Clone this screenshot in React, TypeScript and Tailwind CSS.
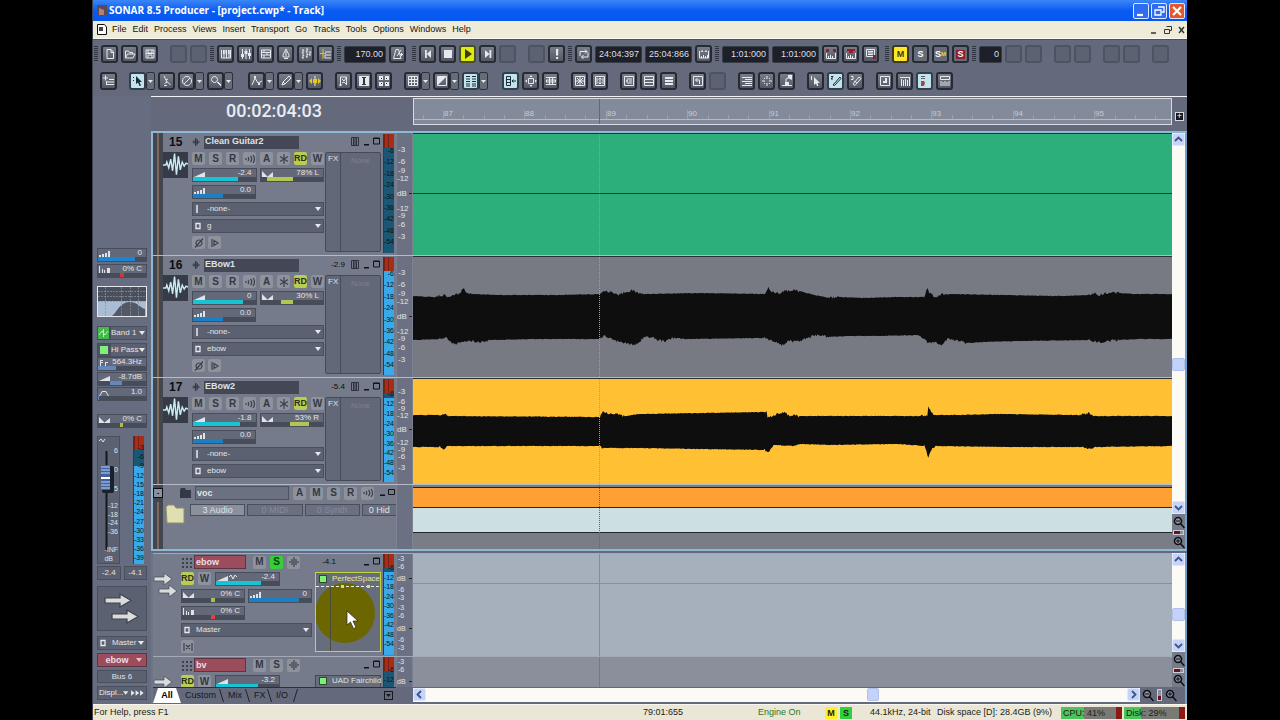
import React from "react";

type Glyph = { d?: string; f?: string; color?: string; f2?: string; color2?: string };

const glyphs: Record<string, Glyph> = {
  none: {},
  newFile: { d: "M3 1.500h4l2.500 2.500v6.500h-6.500zM7 1.500v3h2.500" },
  open: { d: "M1.500 10V3h3l1 1.500h3V6M1.500 10l2-4h7.500l-2 4z" },
  save: { d: "M2 2h8v8H2zM4 2v3h4V2M4 10V7h4v3", f: "M2 5h8v1H2z" },
  keys: { d: "M1.500 2v8h9V2M4 2v8M6.500 2v8M9 2v8", f: "M3 2h1.500v4H3zM5.500 2H7v4H5.500zM8 2h1.500v4H8z" },
  mixer: { d: "M2.500 1v10M6 1v10M9.500 1v10", f: "M1 6h3v3H1zM4.500 3h3v3h-3zM8 5h3v3H8z" },
  list: { d: "M1.500 2h9v8h-9zM1.500 4.500h9M1.500 7h9M4 2v2.500M7 4.500V7M4 7v3" },
  drop: { d: "M6 1L3 7v2h6V7zM4 10.500h4M6 3v5" },
  notes: { d: "M2 2h2L2 5h2M6 1h2L6 4h2M9 4h2L9 7h2M2 7h2l-2 3h2M6 6h2L6 9h2" },
  syn: { d: "M5 4h6M5 7h6M5 10h6M5 7v3", f2: "M0 5h6v1H0zM2.500 1h1v10h-1z", color2: "#e8c820" },
  metro: { d: "M4 1.500h2.500L9 10.500H1.500zM5 8l4-6M8 6.500h3M9.500 5v3" },
  rewind: { f: "M3 2h1.800v8H3zM9 2v8L4.800 6z" },
  stop: { f: "M2 2h8v8H2z" },
  play: { f: "M3 1l7 5-7 5z", color: "#3a3a10" },
  end: { f: "M7.500 2h1.800v8H7.500zM3 2v8l4.500-4z" },
  bang: { f: "M5 1h2.200v6.500H5zM5 9h2.200v2H5z" },
  loop: { d: "M2 8V3.500h7M7 1.500l2 2-2 2M10 4.500v4.500H3.500M5.500 7l-2 2 2 2" },
  punch: { d: "M1.500 3v7h9V3M3.500 10V8M5.500 10V7M7.500 10V8M9.500 10V7M3 4l1-1.500L5 4M7 4l1-1.500L9 4" },
  punchR: { d: "M1.500 5v5.500h9V5M3.500 10V8M5.500 10V7M7.500 10V8", f2: "M1 1h3v3H1zM8 1h3v3H8z", color2: "#a01822" },
  punchRR: { d: "M1.500 5v5.500h9V5M3.500 10V8M5.500 10V7M7.500 10V8", f2: "M2 1h8v2H8v2H4V3H2z", color2: "#a01822" },
  listR: { d: "M1.500 1.500h8v7h-8zM3 3.500h5M3 5h5M3 6.500h5", f2: "M8 7h3v4H8z", color2: "#a01822" },
  addTrack: { d: "M2.500 0.500v5M0 3h5M6 4.500h5M4 7h7M4 9.500h7M3.500 6v4" },
  pointer: { f: "M4 1l6 6H7.500L9 10.500l-1.500.5L6 7.500 4 9z", color: "#1d2c3c", d: "M1 2l1 1M1 6l1-1" },
  scissors: { d: "M3 1l3 6M3.500 8.500l3-1.500 3 3M3 10.500h3M5 5l2-1" },
  mute: { d: "M6 1.500a4.500 4.500 0 1 0 .01 0M3 9l6-6" },
  zoom: { d: "M4.500 1.500a3 3 0 1 0 .01 0M7 7l4 4M8 7l3 3" },
  env: { d: "M1 10l3-7 3 5 4-2", f: "M3 1h2v2H3zM7 8h2v2H7z" },
  pencil: { d: "M2 10l1-3 6-6 2 2-6 6zM3 7l2 2" },
  scrub: { f2: "M0 6l3-3v6zM12 6L9 3v6zM4 4h4v4H4z", color2: "#e8c820", d: "M6 1v3M6 8v3" },
  wand: { d: "M2.500 11V2h6v8M4 4l2 2 2-3M4 8l2-1 3 3M1 10h3" },
  text: { f: "M1 1h10v10H1z", f2: "M4 2h4v1H7v6h1v1H4V9h1V3H4z", color2: "#333844" },
  snapG: { f: "M1 1h4v4H1zM7 1h4v4H7zM1 7h4v4H1zM7 7h4v4H7z", f2: "M3 3h1v1H3zM8 3h1v1H8zM3 8h1v1H3zM8 8h1v1H8z", color2: "#333844" },
  grid: { d: "M1.500 1.500h9v9h-9zM1.500 4.500h9M1.500 7.500h9M4.500 1.500v9M7.500 1.500v9" },
  fade: { f: "M2 2h8L2 10z", d: "M1.500 1.500h9v9h-9z" },
  rows: { d: "M1 1.500h4M1 4h4M1 6.500h4M1 9h4M1 11h4M7 1.500h4M7 4h4M7 6.500h4M7 9h4M7 11h4", color: "#1d2c3c" },
  splitL: { d: "M1.500 1.500h4v9h-4zM1.500 4.500h4M1.500 7.500h4M11 6H7M8.500 4.500L7 6l1.500 1.500", color: "#1d2c3c" },
  move: { d: "M3.500 3.500h5v5h-5z", f: "M6 0l1.500 2h-3zM6 12l1.500-2h-3zM0 6l2-1.500v3zM12 6l-2-1.500v3z" },
  table: { d: "M1 2.500h10M1 9.500h10M1.500 5h9v2h-9zM4.500 2v8M7.500 2v8" },
  fit: { d: "M1.500 1.500h9v9h-9zM6 1.500v9M1.500 6h9M3 3l6 6M9 3L3 9" },
  fitV: { d: "M1.500 1.500h9v9h-9zM6 3v6M4.500 4.500L6 3l1.500 1.500M4.500 7.500L6 9l1.500-1.500M3 3v6M9 3v6" },
  boxIn: { d: "M1.500 1.500h9v9h-9zM4 4h5M4 8h5M3 5l2 1-2 1M6 6h3" },
  boxRow: { d: "M1.500 1.500h9v9h-9zM1.500 4.500h9M1.500 7.500h9" },
  lines: { f: "M2 2h8v2H2zM2 5h8v2H2zM2 8h8v2H2z" },
  undo: { d: "M1.500 1.500h9v9h-9zM3.500 5h4v4M5.500 3l-2 2 2 2" },
  align: { d: "M1 2.500h10M4 4.500h7M1 6.500h10M4 8.500h7M1 10.500h10" },
  cross: { d: "M6 1v3M6 8v3M1 6h3M8 6h3M3 3l1 1M9 3L8 4M3 9l1-1M9 9L8 8" },
  lamp: { d: "M1 10.500h10M5 10V4M5 4l4-2", f: "M7 0h4v5L7 3zM4 7h4v3H4z" },
  arrow1: { d: "M1.500 1v4", f: "M4 2l6 6H7.500L8.500 11H7L6 8.500 4 10z" },
  pencil2: { d: "M1 1.500h2L1 4h2M3 10l7-8 1 1.500-6.500 7z", color: "#1d2c3c" },
  pencil3: { d: "M1 1.500h2v3H1M3 9l6-7 2 1.500-6 7zM4 6l3 2" },
  music: { d: "M1.500 1.500h9v9h-9z", f: "M6 3h2v5H4V6h2z" },
  bars: { d: "M1 2.500h10M2.500 4v7M4.500 5v6M6.500 4v7M8.500 5v6M10.500 2v9" },
  led: { d: "M2 1.500h4M2 3.500h4", f2: "M2 6h3l1 2-1 3H2z", color2: "#9a4a50", color: "#56606e" },
  keysTop: { d: "M1.500 1.500h9v3h-9zM2 6v5M4 7v4M6 6v5M8 7v4M10 6v5" },
};

function Icon({ name, size = 12, color = "#e6eaf0" }: { name: string; size?: number; color?: string }) {
  const g = glyphs[name];
  return (
    <svg width={size} height={size} viewBox="0 0 12 12" aria-hidden="true" className="block">
      {g.f && <path d={g.f} fill={g.color || color} />}
      {g.d && <path d={g.d} fill="none" stroke={g.color || color} strokeWidth="1" />}
      {g.f2 && <path d={g.f2} fill={g.color2} />}
    </svg>
  );
}

const toolBase = "flex h-[18px] w-[17px] shrink-0 items-center justify-center rounded-[3px] border-2 ";
function Tool({ name, tone = "" }: { name: string; tone?: string }) {
  const cls =
    tone === "active"
      ? "border-[#31404c] bg-[#c3e4ea]"
      : tone === "play"
        ? "border-[#4c5020] bg-[#dcec10]"
        : name === "none"
          ? "border-[#4d5362] bg-[#5c6271]"
          : "border-[#262a34] bg-linear-to-b from-[#787d88] to-[#535864]";
  return (
    <button aria-label={name} className={toolBase + cls}>
      <Icon name={name} />
    </button>
  );
}
function Letter({ children, tone = "" }: { children: React.ReactNode; tone?: string }) {
  return (
    <button
      className={
        toolBase +
        "text-[9px] font-bold leading-none " +
        (tone === "yellow" ? "border-[#3a3a20] bg-[#ffe628] text-[#3a3a20]" : "border-[#262a34] bg-[#666b77] text-white")
      }
    >
      {children}
    </button>
  );
}
function Menu() {
  return (
    <button aria-label="options" className="flex h-[18px] w-[9px] shrink-0 items-center justify-center rounded-[2px] border border-[#2b303b] bg-[#666c78]">
      <svg width="5" height="3" viewBox="0 0 5 3"><path d="M0 0h5L2.500 3z" fill="#e6eaf0" /></svg>
    </button>
  );
}
function Grip() {
  return (
    <svg width="4" height="16" viewBox="0 0 4 16" className="shrink-0">
      {[0, 2, 4, 6, 8, 10, 12, 14].map((y) => (
        <path key={y} d={`M0 ${y}h4v1h-4z`} fill="#2f3440" />
      ))}
    </svg>
  );
}
function Field({ value, label, wide = "w-[47px]" }: { value: string; label: string; wide?: string }) {
  return (
    <input
      aria-label={label}
      defaultValue={value}
      className={"h-[17px] shrink-0 rounded-[2px] border border-[#363b47] bg-[#1d2028] px-0.5 text-right text-[9px] text-[#dcdfe6] " + wide}
    />
  );
}
const Gap = () => <span className="w-1.5 shrink-0" />;

function ToolGroup({ items, pad = "" }: { items: string[]; pad?: string }) {
  return (
    <div className={"flex gap-[3px] " + pad}>
      {items.map((it, i) => {
        const active = it.includes("*");
        const menu = it.includes("+");
        const name = it.replace(/[*+]/g, "");
        return (
          <div key={i} className="flex">
            <Tool name={name} tone={active ? "active" : ""} />
            {menu && <Menu />}
          </div>
        );
      })}
    </div>
  );
}

const ramp = "M0 8L11 3v5z";
const bars = "M0 6h2v2H0zM3 5h2v3H3zM6 4h2v4H6zM9 2h2v6H9z";
const pan = "M0 2v6h6zM11 3v5H5z";
const send = "M0 1h1v7H0zM3 4h1v4H3zM5 5h1v3H5zM8 3h3v5H8z";

type SliderProps = { label: string; text: string; from: number; to: number; color: string; shape: string; automated?: boolean };
function Slider({ label, text, from, to, color, shape, automated }: SliderProps) {
  return (
    <label className="flex h-[14px] min-w-0 flex-1 flex-col border border-[#484d5b] bg-[#636978]">
      <span className="flex h-2 items-center justify-between overflow-visible pl-px pr-1">
        <span className="flex">
          <svg width="11" height="8" viewBox="0 0 11 8"><path d={shape} fill="#dfe3e8" /></svg>
          {automated && (
            <svg width="10" height="8" viewBox="0 0 10 8"><path d="M1 4l2-2 2 4 2-4 2 2" fill="none" stroke="#e6eaf0" /></svg>
          )}
        </span>
        <span className="text-[8px] leading-none text-[#e2e5ea]">{text}</span>
      </span>
      <input
        type="range"
        aria-label={label}
        defaultValue={to}
        style={{ background: `linear-gradient(90deg,#474c59 ${from}%,${color} ${from}%,${color} ${to}%,#474c59 ${to}%)` }}
        className="h-1 w-full appearance-none [&::-webkit-slider-thumb]:size-0 [&::-webkit-slider-thumb]:appearance-none"
      />
    </label>
  );
}

function Drop({ label, value, mark }: { label: string; value: string; mark?: string }) {
  return (
    <label className={"flex h-[14px] items-center border border-[#4a4f5d] bg-[#5b6170] " + (mark ? "pr-0.5" : "pr-px")}>
      {mark && (
        <svg width="14" height="8" viewBox="0 0 14 8" className="shrink-0">
          {mark === "in" ? <path d="M4 0v8" stroke="#e6eaf0" strokeWidth="1.500" /> : <path d="M3 1.500h4v5H3z" fill="none" stroke="#e6eaf0" strokeWidth="1.300" />}
        </svg>
      )}
      <select aria-label={label} className="h-full min-w-0 flex-1 appearance-none bg-transparent text-[8px] leading-none text-[#e2e5ea] outline-none">
        <option>{value}</option>
      </select>
      <svg width="6" height="4" viewBox="0 0 6 4" className="shrink-0"><path d="M0 0h6L3 4z" fill="#e6eaf0" /></svg>
    </label>
  );
}

const miniBase = "flex h-[13px] w-[13px] shrink-0 items-center justify-center rounded-[2px] font-bold leading-none ";
function Mini({ t }: { t: string }) {
  const tone =
    t === "RD" ? "bg-[#b9cc55] text-[9px] text-[#2c3018]" : t === "S!" ? "bg-[#35cf3a] text-[10px] text-[#0c3c10]" : "bg-[#8d929c] text-[10px] text-[#343843]";
  const draw: Record<string, string> = {
    echo: "M1 4v2M3 3q1.500 2 0 4M5.500 2q2.500 3 0 6M8 1q3 4 0 8",
    freeze: "M5 0v10M1 2.500l8 5M9 2.500l-8 5",
    wave: "M1 4v2M3 2v6M5 0v10M7 2v6M9 4v2",
    phase: "M5 2a3 3 0 1 0 .01 0M1 9.500l8-9",
    mono: "M2 1v8M4 2.500v5l4-2.500z",
    io: "M1 1v8M9 1v8M3 3l4 4M7 3L3 7",
  };
  return (
    <button aria-label={t} className={miniBase + tone}>
      {draw[t] ? (
        <svg width="10" height="10" viewBox="0 0 10 10"><path d={draw[t]} fill="none" stroke="#3b404c" strokeWidth="1.200" /></svg>
      ) : (
        t.replace("!", "")
      )}
    </button>
  );
}

function WinMarks({ piano = false }: { piano?: boolean }) {
  return (
    <svg width="31" height="12" viewBox="0 0 31 12" className="shrink-0">
      {piano && <path d="M1.500 1.500h7v8h-7zM3.500 2v7M5 2v7M6.500 2v7" fill="none" stroke="#2d323d" />}
      <path d="M14 8h5v1.500h-5z" fill="#10131a" />
      <path d="M23.500 2h6v6h-6zM23 2.500h7" fill="none" stroke="#10131a" />
    </svg>
  );
}

function Meter({ h, first, step, lit, labels }: { h: number; first: number; step: number; lit: number; labels: string[] }) {
  return (
    <svg width="11" height={h} viewBox={`0 0 11 ${h}`} className="shrink-0">
      <rect width="11" height={h} fill="#1b5775" />
      <rect y={lit} width="11" height={h - lit} fill="#38a9ea" />
      <rect width="11" height="14" fill="#a92c16" />
      <path d="M1.500 0v14M5.500 0v14" stroke="#7a2012" />
      {labels.map((l, i) => (
        <text key={l} x="11" y={first + i * step + 3} fontSize="7" textAnchor="end" fill="#06141f">{l}</text>
      ))}
      <path d={`M.5 0V${h}`} stroke="#2a3c50" />
    </svg>
  );
}
const trackDb = ["-6", "-12", "-18", "-24", "-30", "-36", "-42", "-48", "-54"];

function Scale({ marks, h, size = 8 }: { marks: [string, number][]; h: number; size?: number }) {
  return (
    <svg width="17" height={h} viewBox={`0 0 17 ${h}`} className="shrink-0 bg-[#6b7182]">
      {marks.map(([l, y], i) => (
        <g key={i}>
          <text x={l === "dB" ? 1 : l.length > 2 ? 1 : 2} y={y + 3} fontSize={size} fill="#e2e5ea">{l}</text>
          {l === "dB" && <path d={`M13 ${y}.5h3`} stroke="#23262e" />}
        </g>
      ))}
      <path d="M.5 0v200M16.500 0v200" stroke="#8b91a0" strokeOpacity=".5" />
    </svg>
  );
}

type Pt = [number, number];
const parse = (s: string): Pt[] => s.split(" ").map((p) => p.split(",").map(Number) as Pt);
function edge(points: Pt[], seed: number) {
  const out: string[] = [];
  for (let i = 0; i < points.length - 1; i++) {
    const [x0, y0] = points[i];
    const [x1, y1] = points[i + 1];
    for (let x = x0; x < x1; x++) {
      const n = Math.sin((x + seed) * 12.9898) * 43758.5453;
      const jitter = (n - Math.floor(n) - 0.5) * (x1 - x0 > 14 ? 0.6 : 2.8);
      out.push(`${x},${(y0 + ((y1 - y0) * (x - x0)) / (x1 - x0) + jitter).toFixed(1)}`);
    }
  }
  const last = points[points.length - 1];
  out.push(`${last[0]},${last[1]}`);
  return out;
}
function Wave({ top, bottom, y, h }: { top: string; bottom: string; y: number; h: number }) {
  const pts = [...edge(parse(top), 3), ...edge(parse(bottom), 9).reverse()].join(" ");
  return (
    <svg width="100%" height={h} viewBox={`413 ${y} 760 ${h}`} preserveAspectRatio="none" className="block">
      <polygon points={pts} fill="#0e0e0f" />
    </svg>
  );
}
const ebow1Top =
  "413,296 433,297 443,295 444,293 446,297 455,295 460,293 463,288 466,292 475,294 500,295 560,295 600,294 605,291 612,292 618,296 625,292 632,290 638,293 645,294 700,293 765,294 767,290 769,287 771,292 780,294 786,291 790,290 800,291 815,295 830,298 840,297 865,298 900,297 925,297 928,287 930,293 936,297 943,294 950,294 1000,295 1060,296 1090,295 1095,293 1100,295 1110,292 1120,293 1135,294 1173,294";
const ebow1Bottom =
  "413,340 440,339 446,337 450,342 457,344 462,341 472,341 480,342 490,340 540,339 600,339 604,335 608,338 615,341 622,341 628,344 635,345 641,341 645,336 652,337 658,340 666,341 672,338 685,339 765,338 769,340 775,342 781,345 790,341 797,341 803,340 810,337 820,335 828,337 850,336 880,336 920,335 928,342 935,342 942,345 948,339 955,340 968,343 985,342 1020,341 1090,340 1100,342 1110,341 1120,340 1140,339 1173,339";
const ebow2Top =
  "413,415 440,415 443,413 446,415 450,416 600,417 603,412 612,414 625,416 640,414 700,413 765,412 767,410 768,417 773,417 778,414 785,413 790,415 800,416 922,416 928,415 929,406 932,413 937,415 960,415 1000,414 1080,415 1090,413 1095,416 1173,416";
const ebow2Bottom =
  "413,447 440,447 444,449 448,446 600,446 604,448 640,448 700,449 765,450 768,453 772,449 774,445 795,446 800,444 830,445 900,444 925,446 929,457 932,449 937,446 1000,447 1085,447 1090,449 1095,447 1173,446";

const audioPath = "M0 13h3l1-3 2 6 2-9 2 12 2-18 2 22 2-19 2 14 2-8 2 4 2-3 2 1";

const Stripe = () => (
  <div className="flex w-[10px] shrink-0 justify-center bg-[#43464d]">
    <div className="w-[2px] bg-[#7d6a5c]" />
  </div>
);

type TrackProps = {
  n: number; name: string; peak?: string; out: string; vol: SliderProps; pan: SliderProps;
  h: string; px: number; buttons?: boolean; lit: number; step: number; scale: [string, number][];
  clip: string; children: React.ReactNode;
};
function Track(p: TrackProps) {
  return (
    <section className={"flex shrink-0 border-b border-[#b4bac6] " + p.h}>
      <Stripe />
      <div className="flex w-[233px] shrink-0 gap-0.5 bg-[#757b8a] pt-px">
        <div className="flex w-[218px] flex-col gap-[3px] pt-px">
          <div className="flex h-[14px] items-center">
            <span className="w-[29px] pl-1.5 text-[12px] font-bold leading-none text-[#0b0d12]">{p.n}</span>
            <svg width="9" height="8" viewBox="0 0 10 10" className="mr-[3px] shrink-0"><path d="M0 5h1M2 3v4M4 0v10M6 2v6M8 4v2" stroke="#2d323d" strokeWidth="1.500" /></svg>
            <input aria-label="Track name" defaultValue={p.name} className="h-[13px] w-[95px] shrink-0 bg-[#434756] pl-px text-[9px] font-bold text-[#dfe2e8]" />
            <span className="flex-1 pr-[5px] text-right text-[8px] text-[#0b0d12]">{p.peak}</span>
            <WinMarks piano />
          </div>
          <div className="flex min-h-0 flex-1">
            <div className="h-[26px] w-[25px] shrink-0 bg-[#363b47]">
              <svg width="25" height="26" viewBox="0 0 26 26"><path d={audioPath} fill="none" stroke="#c9ecf2" strokeWidth="1.500" /></svg>
            </div>
            <div className="ml-1 flex w-[132px] shrink-0 flex-col gap-[3px]">
              <div className="flex gap-1">
                {["M", "S", "R", "echo", "A", "freeze", "RD", "W"].map((b) => <Mini key={b} t={b} />)}
              </div>
              <div className="flex gap-[3px]"><Slider {...p.vol} /><Slider {...p.pan} /></div>
              <div className="flex w-16"><Slider label="Trim" text="0.0" from={0} to={49} color="#1c7fc4" shape={bars} /></div>
              <Drop label="Input" value="-none-" mark="in" />
              <Drop label="Output" value={p.out} mark="out" />
              {p.buttons && <div className="flex gap-[3px]"><Mini t="phase" /><Mini t="mono" /></div>}
            </div>
            <div className="mb-[3px] ml-px flex flex-1 rounded-[2px] border border-[#454a58] bg-[#626877] text-[8px]">
              <span className="w-[15px] border-r border-[#474c5a] pl-0.5 text-[#dfe2e8]">FX</span>
              <span className="flex-1 pt-0.5 text-center text-[#7b8190]">None</span>
            </div>
          </div>
        </div>
        <Meter h={p.px - 4} first={p.step > 10 ? 16 : 14} step={p.step} lit={p.lit} labels={trackDb} />
      </div>
      <Scale marks={p.scale} h={p.px - 1} />
      <div className={"relative min-w-0 flex-1 border-t border-[#2c2f36] " + p.clip}>
        {p.children}
        <div className="absolute inset-y-0 left-[186px] border-l border-dotted border-[#9a9ea8]" />
      </div>
    </section>
  );
}

const bigScale: [string, number][] = [["-3", 16], ["-6", 28], ["-9", 37], ["-12", 45], ["dB", 60], ["-12", 75], ["-9", 82], ["-6", 91], ["-3", 103]];
const midScale: [string, number][] = [["-3", 13], ["-6", 23], ["-9", 30], ["-12", 37], ["dB", 51], ["-12", 64], ["-9", 71], ["-6", 78], ["-3", 89]];
const busScale: [string, number][] = [["-3", 4], ["-6", 12], ["dB", 24], ["-6", 35], ["-3", 43], ["-3", 53], ["-6", 61], ["dB", 74], ["-6", 85], ["-3", 93]];

const arrowPath = "M0 5h12V1l9 6.500-9 6.500v-4H0z";
function BusArrows({ second }: { second: boolean }) {
  return (
    <svg width="25" height="34" viewBox="0 0 25 34" className="shrink-0">
      <g fill="#d9dcdf" stroke="#4c515c" strokeWidth=".8">
        <path d="M1 5h10V1l8 6-8 6V9H1z" />
        {second && <path d="M6 17h10v-4l8 6-8 6v-4H6z" />}
      </g>
    </svg>
  );
}

function BusTop({ name, peak, solo }: { name: string; peak?: string; solo: boolean }) {
  return (
    <div className="flex h-[14px] items-center pl-7">
      <svg width="11" height="11" viewBox="0 0 11 11" className="mr-0.5 shrink-0">
        <path d="M1 1h2v2H1zM5 1h2v2H5zM9 1h2v2H9zM1 5h2v2H1zM5 5h2v2H5zM9 5h2v2H9zM1 9h2v2H1zM5 9h2v2H5zM9 9h2v2H9z" fill="#3b404c" />
      </svg>
      <input aria-label="Bus name" defaultValue={name} className="mr-[7px] h-[14px] w-[52px] shrink-0 border border-[#5d3440] bg-[#9b4c5d] pl-px text-[9px] font-bold text-[#ecdfe3]" />
      <div className="flex gap-1"><Mini t="M" /><Mini t={solo ? "S!" : "S"} /><Mini t="wave" /></div>
      <span className="flex-1 pr-[14px] text-right text-[8px] text-[#0b0d12]">{peak}</span>
      <WinMarks />
    </div>
  );
}

function Chevron({ dir }: { dir: "up" | "down" | "left" | "right" }) {
  const d = { up: "M2 7l3.500-3.500L9 7", down: "M2 4l3.500 3.500L9 4", left: "M7 2L3.500 5.500 7 9", right: "M4 2l3.500 3.500L4 9" }[dir];
  return (
    <button aria-label={dir} className="flex size-[13px] shrink-0 items-center justify-center rounded-[2px] border border-[#dfe8fb] bg-[#c5d4f8]">
      <svg width="11" height="11" viewBox="0 0 11 11"><path d={d} fill="none" stroke="#3d5486" strokeWidth="1.800" /></svg>
    </button>
  );
}
function ZoomMark({ plus }: { plus?: boolean }) {
  return (
    <button aria-label={plus ? "Zoom in" : "Zoom out"} className="block shrink-0">
      <svg width="12" height="13" viewBox="0 0 12 13">
        <path d="M5 1.500a3.500 3.500 0 1 0 .01 0M7.500 7.500l4 4.500" fill="#8a909c" stroke="#0c0e13" strokeWidth="1.500" />
        <path d={plus ? "M3 5h4M5 3v4" : "M3 5h4"} stroke="#0c0e13" />
      </svg>
    </button>
  );
}
function VScroll({ above, below }: { above: string; below: string }) {
  return (
    <div className="flex w-[13px] shrink-0 flex-col bg-[#757b89]">
      <div className="flex min-h-0 flex-1 flex-col bg-[#fbfaf4]">
        <Chevron dir="up" />
        <div className={above} />
        <div className="h-[13px] shrink-0 rounded-[2px] border border-[#aec0f0] bg-[#c5d2f8]" />
        <div className={below} />
        <Chevron dir="down" />
      </div>
      <div className="flex h-[35px] shrink-0 flex-col items-center justify-between pt-0.5">
        <ZoomMark />
        <div className="flex h-[5px] w-[11px] border border-[#c9ccd4] bg-[#8a8f9b]"><div className="w-1.5 bg-[#6e1018]" /></div>
        <ZoomMark plus />
      </div>
    </div>
  );
}

function Ruler() {
  const start = 30;
  const pitch = 81.4;
  return (
    <svg width="100%" height="27" className="block min-w-0 flex-1 border border-[#d7dbe4] bg-[#838b9a]">
      {Array.from({ length: 37 }, (_, i) => {
        const x = Math.round(start + (i - 1) * (pitch / 4)) - 1;
        return <path key={i} d={`M${x}.5 ${(i - 1) % 4 === 0 ? 11 : 16}V20`} stroke="#aab1be" strokeOpacity=".6" />;
      })}
      {[87, 88, 89, 90, 91, 92, 93, 94, 95].map((n, i) => (
        <text key={n} x={Math.round(start + i * pitch)} y="17" fontSize="8" fill="#c6ccd6">{n}</text>
      ))}
      <path d="M0 20.500h2000" stroke="#b3bac6" />
      <path d="M185.500 0v27" stroke="#60697a" />
    </svg>
  );
}

type Label = [string, number];
const insBox = "border border-[#4a4f5d] bg-[#5b6170]";
function Inspector() {
  return (
    <aside className="flex w-[58px] shrink-0 flex-col bg-[#676d80] pl-1 pr-1">
      <div className="mt-[152px] flex flex-col gap-0.5">
        <div className="flex"><Slider label="Volume trim" text="0" from={0} to={78} color="#1c86d4" shape={bars} /></div>
        <div className="flex"><Slider label="Send pan" text="0% C" from={46} to={54} color="#d03838" shape={send} /></div>
      </div>
      <svg width="100%" height="31" viewBox="0 0 50 31" preserveAspectRatio="none" className="mt-2 block">
        <rect x=".5" y=".5" width="49" height="30" fill="#4a4f5c" stroke="#e4e7ec" />
        <path d="M1 15h48v15H1z" fill="#a9bed4" />
        <path d="M15 30c5-4 8-14 17-14s10 5 16 7v7z" fill="#525865" />
        <path d="M1 5.500h48M1 10.500h48M1 15.500h48M8.500 1v29M24.500 1v29M33.500 1v29M41.500 1v29" stroke="#8b92a0" strokeDasharray="2 1" strokeWidth=".7" />
      </svg>
      <div className="mt-[9px] flex flex-col gap-[3px]">
        <div className="flex">
          <span className="h-[14px] w-[13px] shrink-0 border border-[#474c5a] bg-[#45b84c]"><svg width="11" height="12" viewBox="0 0 11 12"><path d="M1 8l3-4 3 4 3-4M5.500 2v8" fill="none" stroke="#b4f0b4" /></svg></span>
          <div className="min-w-0 flex-1"><Drop label="EQ band" value="Band 1" /></div>
        </div>
        <div className="flex">
          <span className="flex h-[14px] w-[13px] shrink-0 items-center justify-center border border-[#474c5a] bg-[#4d525f]"><span className="size-2 bg-[#7df07a]" /></span>
          <div className="min-w-0 flex-1"><Drop label="EQ type" value="Hi Pass" /></div>
        </div>
      </div>
      <div className="flex flex-col gap-px">
        <div className="flex"><Slider label="Frequency" text="564.3Hz" from={0} to={38} color="#6488bd" shape="M1 2h3v1H2v1h2v1H2v3H1zM6 4h3v1H7v3H6z" /></div>
        <div className="flex"><Slider label="Gain" text="-8.7dB" from={24} to={50} color="#6488bd" shape={ramp} /></div>
        <div className="flex"><Slider label="Q" text="1.0" from={0} to={2} color="#6488bd" shape="M0 8l3-5h4l3 5H9L6.500 4h-3L1 8z" /></div>
      </div>
      <div className="mt-[13px] flex"><Slider label="Pan" text="0% C" from={46} to={53} color="#a9c04c" shape={pan} /></div>
      <div className="mt-[8px] flex justify-between pr-[3px]">
        <label className={"relative block h-[128px] w-[23px] " + insBox}>
          <svg width="21" height="126" viewBox="0 0 21 126">
            <path d="M1 4l2-2 2 3 2-3" fill="none" stroke="#dfe3e8" />
            <path d="M8.500 14v100" stroke="#15181f" strokeWidth="2" />
            {([["6", 16], ["0", 35], ["5", 54], ["-12", 71], ["-18", 80], ["-24", 88], ["-36", 97], ["-INF", 115], ["dB", 124]] as Label[]).map(([t, y]) => (
              <text key={t} x={t === "dB" ? 15 : 20} y={y} fontSize="7" textAnchor="end" fill="#dfe3e8">{t}</text>
            ))}
            <rect x="4" y="29" width="12" height="27" rx="2" fill="#1c202a" />
            <path d="M3 28h9v25H3z" fill="#3f62a4" />
            <path d="M3 30h9M3 33h9M3 36h9M3 45h9M3 48h9M3 51h9" stroke="#c2d2ee" />
            <path d="M3 41h9" stroke="#ffffff" strokeWidth="2" />
          </svg>
          <input type="range" aria-label="Fader" className="absolute inset-0 h-full w-full opacity-0" />
        </label>
        <Meter h={128} first={11} step={9.200} lit={30} labels={["-3", "-6", "-9", "-12", "-15", "-18", "-21", "-24", "-27", "-30", "-33", "-36", "-39"]} />
      </div>
      <div className="mt-0.5 flex gap-[3px] text-center text-[8px] leading-[12px] text-[#dfe2e8]">
        <span className={"flex-1 " + insBox}>-2.4</span><span className={"flex-1 " + insBox}>-4.1</span>
      </div>
      <div className={"mt-[6px] h-[45px] " + insBox}>
        <svg width="100%" height="43" viewBox="0 0 48 43">
          <g fill="#dadcdc" stroke="#3d424d"><g transform="translate(7 6)"><path d={arrowPath} transform="scale(1.250 1)" /></g><g transform="translate(14 22)"><path d={arrowPath} transform="scale(1.250 1)" /></g></g>
        </svg>
      </div>
      <div className="mt-[5px] flex flex-col gap-[3px]">
        <Drop label="Bus output" value="Master" mark="out" />
        <label className="flex h-[14px] items-center border border-[#5d3440] bg-[#9b4c5d] pr-1">
          <select aria-label="Selected bus" className="min-w-0 flex-1 appearance-none bg-transparent text-center text-[9px] font-bold leading-none text-[#ecdfe3]"><option>ebow</option></select>
          <svg width="6" height="4" viewBox="0 0 6 4"><path d="M0 0h6L3 4z" fill="#e8c0c8" /></svg>
        </label>
        <span className={"h-[13px] text-center text-[8px] leading-[11px] text-[#dfe2e8] " + insBox}>Bus 6</span>
        <button className={"flex h-[14px] items-center justify-between px-px text-[8px] leading-none text-[#e6e9ee] " + insBox}>
          Displ...
          <svg width="22" height="6" viewBox="0 0 24 6"><path d="M0 1h6L3 5zM9 0l4 3-4 3zM14 0l4 3-4 3zM19 0l4 3-4 3z" fill="#e6eaf0" /></svg>
        </button>
      </div>
    </aside>
  );
}

function MdiIcon() {
  return (
    <svg width="10" height="11" viewBox="0 0 10 11" className="shrink-0"><path d="M.5.5h7L9.500 3v7.500h-9z" fill="#fff" stroke="#111" /><path d="M2 3h4v4H2z" fill="#444" /></svg>
  );
}

function TitleButton({ kind }: { kind: "min" | "max" | "close" }) {
  const d = { min: "M3 11h6", max: "M6 3h6v5h-2M3 6h6v5H3z", close: "M3 3l8 8M11 3l-8 8" }[kind];
  return (
    <button
      aria-label={kind}
      className={"flex size-4 items-center justify-center rounded-[2px] border border-[#dfe8ff] " + (kind === "close" ? "bg-[#e3572f]" : "bg-[#2f6df0]")}
    >
      <svg width="14" height="14" viewBox="0 0 14 14"><path d={d} fill="none" stroke="#fff" strokeWidth={kind === "max" ? 1.3 : 2.2} /></svg>
    </button>
  );
}

const subRow = "h-[12px] flex-1 border text-[9px] leading-[10px] ";

export default function App() {
  return (
    <div className="flex min-h-screen bg-black pl-[92px] pr-[93px] font-['Liberation_Sans',Arial,sans-serif]">
      <main className="flex min-w-0 flex-1 flex-col overflow-hidden border-l border-[#3c424e] bg-[#646a7b]">
        <header className="flex h-[21px] shrink-0 items-center bg-linear-to-b from-[#3a86f8] via-[#0a5bf2] to-[#0558ee] pl-1 pr-0.5">
          <svg width="10" height="13" viewBox="0 0 10 13"><path d="M0 1h10v11H0z" fill="#5d4a52" /><path d="M2 4l5 2v5H2z" fill="#b08078" /></svg>
          <h1 className="flex-1 pl-0.5 font-['Open_Sans',sans-serif] text-[10px] font-bold text-white">SONAR 8.5 Producer - [project.cwp* - Track]</h1>
          <div className="flex gap-0.5"><TitleButton kind="min" /><TitleButton kind="max" /><TitleButton kind="close" /></div>
        </header>
        <nav className="flex h-[18px] shrink-0 items-center border-b border-[#fafaf5] bg-[#efebd9] pl-1">
          <MdiIcon />
          <div className="flex flex-1 gap-1.5 pl-[5px] text-[9px] text-[#15150f]">
            {["File", "Edit", "Process", "Views", "Insert", "Transport", "Go", "Tracks", "Tools", "Options", "Windows", "Help"].map((m) => (
              <button key={m}>{m}</button>
            ))}
          </div>
          <svg width="40" height="12" viewBox="0 0 40 12"><path d="M4 9h5" stroke="#333" strokeWidth="1.500" /><path d="M19.500 2.500h5v4h-2M17.500 5.500h5v4h-5z" fill="none" stroke="#333" /><path d="M32 3l5 6M37 3l-5 6" stroke="#333" strokeWidth="1.500" /></svg>
        </nav>

        <div className="flex flex-col gap-[9px] border-t border-[#4a505e] pt-[5px]">
          <div className="flex items-center gap-[3px] pl-px">
            <Grip /><Tool name="newFile" /><Tool name="open" /><Tool name="save" /><Gap /><Tool name="none" /><Tool name="none" />
            <Grip /><Tool name="keys" /><Tool name="mixer" /><Tool name="list" /><Tool name="drop" /><Tool name="notes" /><Tool name="syn" />
            <Grip /><Field label="Tempo" value="170.00" wide="w-[42px]" /><div className="pr-[3px]"><Tool name="metro" /></div>
            <Grip /><Tool name="rewind" /><Tool name="stop" /><Tool name="play" tone="play" /><Tool name="end" /><Tool name="none" /><Gap /><Tool name="none" /><Tool name="bang" />
            <Grip /><Tool name="loop" /><Field label="Loop start" value="24:04:397" /><Field label="Loop end" value="25:04:866" /><Tool name="punch" />
            <Grip /><Field label="Punch in" value="1:01:000" /><Field label="Punch out" value="1:01:000" /><Tool name="punchR" /><Tool name="punchRR" /><div className="pr-[3px]"><Tool name="listR" /></div>
            <Grip /><Letter tone="yellow">M</Letter><Letter>S</Letter><Letter>S<span className="text-[6px] text-[#e8d830]">M</span></Letter><Letter><span className="bg-[#8a2030] px-px">S</span></Letter>
            <Grip /><Field label="Marker" value="0" wide="w-[23px]" /><Tool name="none" /><Tool name="none" /><Gap /><Tool name="none" /><Tool name="none" /><Gap /><Tool name="none" /><Tool name="none" /><Gap /><Tool name="none" />
          </div>
          <div className="flex gap-3 pb-[6px] pl-[7px]">
            <ToolGroup items={["addTrack"]} />
            <ToolGroup items={["pointer*+", "scissors", "mute+", "zoom+"]} pad="pr-[3px]" />
            <ToolGroup items={["env+", "pencil+", "scrub"]} />
            <ToolGroup items={["wand", "text", "snapG"]} />
            <ToolGroup items={["grid+", "fade+", "rows*+"]} pad="pr-0.5" />
            <ToolGroup items={["splitL*", "move", "table"]} />
            <ToolGroup items={["fit", "fitV"]} />
            <ToolGroup items={["boxIn", "boxRow", "lines"]} />
            <ToolGroup items={["undo", "none"]} />
            <ToolGroup items={["align", "cross", "lamp"]} />
            <ToolGroup items={["arrow1", "pencil2*", "pencil3"]} />
            <ToolGroup items={["music", "bars", "led*", "keysTop"]} />
          </div>
        </div>

        <div className="flex min-h-0 flex-1">
          <Inspector />
          <div className="flex min-w-0 flex-1 flex-col">
            <div className="flex h-[35px] shrink-0 items-start border-t border-[#f2f4f7] pt-px">
              <div className="w-[262px] shrink-0 pr-4 pt-px text-center font-['Roboto',sans-serif] text-[18px] font-medium leading-6 text-[#e9edf3]">00:02:04:03</div>
              <Ruler />
              <button aria-label="Add marker" className="mx-[3px] mt-[14px] flex size-[9px] items-center justify-center border border-[#d8dbe2] bg-[#15181f] text-[9px] leading-none text-white">+</button>
            </div>

            <div className="flex h-[420px] shrink-0 border-2 border-[#8db9d6] border-r-[#6fa0cc]">
              <div className="flex min-w-0 flex-1 flex-col">
                <Track
                  n={15} name="Clean Guitar2" out="g" h="h-[123px]" px={123} buttons lit={119} step={11.4} scale={bigScale} clip="bg-[#2caf7a]"
                  vol={{ label: "Volume", text: "-2.4", from: 0, to: 71, color: "#17c3d4", shape: ramp }}
                  pan={{ label: "Pan", text: "78% L", from: 9, to: 52, color: "#b3c653", shape: pan }}
                >
                  <div className="h-[60px] border-b border-[#153f2e]" />
                </Track>
                <Track
                  n={16} name="EBow1" peak="-2.9" out="ebow" h="h-[122px]" px={122} buttons lit={14} step={11.4} scale={bigScale} clip="bg-[#777a82]"
                  vol={{ label: "Volume", text: "0", from: 0, to: 80, color: "#17c3d4", shape: ramp }}
                  pan={{ label: "Pan", text: "30% L", from: 32, to: 52, color: "#b3c653", shape: pan }}
                >
                  <Wave top={ebow1Top} bottom={ebow1Bottom} y={257} h={120} />
                </Track>
                <Track
                  n={17} name="EBow2" peak="-5.4" out="ebow" h="h-[107px]" px={107} lit={19} step={9.9} scale={midScale} clip="bg-[#ffc033]"
                  vol={{ label: "Volume", text: "-1.8", from: 0, to: 74, color: "#17c3d4", shape: ramp }}
                  pan={{ label: "Pan", text: "53% R", from: 47, to: 77, color: "#b3c653", shape: pan }}
                >
                  <Wave top={ebow2Top} bottom={ebow2Bottom} y={379} h={105} />
                </Track>
                <section className="flex min-h-0 flex-1">
                  <div className="flex w-[10px] shrink-0 flex-col bg-[#43464d]">
                    <button aria-label="Collapse folder" className="mt-[3px] flex size-[10px] shrink-0 items-center justify-center border border-[#0c0e13] bg-[#8a909c] text-[9px] leading-none text-black">-</button>
                    <div className="mt-1 w-[2px] flex-1 self-center bg-[#7d6a5c]" />
                  </div>
                  <div className="w-[233px] shrink-0 overflow-hidden bg-[#757b8a]">
                    <div className="flex h-[16px] items-center gap-1 pl-[17px]">
                      <svg width="11" height="10" viewBox="0 0 11 10" className="shrink-0"><path d="M0 2l1-2h4l1 2h5v8H0z" fill="#343946" /></svg>
                      <input aria-label="Folder name" defaultValue="voc" className="h-[14px] w-[94px] shrink-0 border border-[#4d5260] bg-[#6b7180] px-px text-[9px] font-bold text-[#dfe2e8]" />
                      {["A", "M", "S", "R", "echo"].map((b) => <Mini key={b} t={b} />)}
                      <svg width="18" height="10" viewBox="0 0 18 10" className="shrink-0"><path d="M2 6.500h5v1.500H2z" fill="#10131a" /><path d="M10.500 1.500h6v5h-6z" fill="none" stroke="#10131a" /></svg>
                    </div>
                    <div className="flex">
                      <svg width="27" height="24" viewBox="0 0 27 24" className="shrink-0"><path d="M3 6l2-2h6l2 3h8v15H4z" fill="#dfdfb2" stroke="#8d8d70" /></svg>
                      <div className="mt-[3px] flex w-[233px] shrink-0 gap-0.5">
                        <span className={subRow + "border-[#4a4f5d] bg-[#8a909c] text-center text-[#dfe3e9]"}>3 Audio</span>
                        <span className={subRow + "border-[#4a4f5d] bg-[#6a7080] text-center text-[#858b99]"}>0 MIDI</span>
                        <span className={subRow + "border-[#4a4f5d] bg-[#6a7080] text-center text-[#858b99]"}>0 Synth</span>
                        <span className={subRow + "border-[#4a4f5d] bg-[#6a7080] pl-1.5 text-[#dfe3e9]"}>0 Hid</span>
                      </div>
                    </div>
                  </div>
                  <div className="w-[17px] shrink-0 border-x border-[#7d8392] bg-[#6b7182]" />
                  <div className="relative flex min-w-0 flex-1 flex-col bg-[#7a7d85]">
                    <div className="mt-[2px] h-[21px] shrink-0 border-b border-t border-[#23262d] bg-[#ffa032]" />
                    <div className="h-[25px] shrink-0 border-b border-[#23262d] bg-[#cce0e2]" />
                    <div className="absolute inset-y-0 left-[186px] border-l border-dotted border-[#5d6370]" />
                  </div>
                </section>
              </div>
              <VScroll above="flex-[211]" below="flex-[130]" />
            </div>

            <div className="mt-[2px] flex min-h-0 flex-1 flex-col border-l-2 border-r-2 border-[#6f7585] border-r-[#6fa0cc]">
              <div className="flex h-[134px] shrink-0">
                <div className="flex min-w-0 flex-1 flex-col">
                  <section className="flex h-[104px] shrink-0 border-y border-[#a3a9b6]">
                    <div className="flex w-[243px] shrink-0 gap-0.5 bg-[#757b8a]">
                      <div className="flex w-[228px] flex-col gap-[3px] pt-px">
                        <BusTop name="ebow" peak="-4.1" solo />
                        <div className="flex">
                          <BusArrows second />
                          <div className="ml-[3px] flex w-[131px] shrink-0 flex-col gap-[3px]">
                            <div className="flex w-[99px] gap-1"><Mini t="RD" /><Mini t="W" /><Slider label="Bus volume" text="-2.4" from={0} to={71} color="#17c3d4" shape={ramp} automated /></div>
                            <div className="flex gap-[3px]"><Slider label="Bus pan" text="0% C" from={47} to={53} color="#a9c04c" shape={pan} /><Slider label="Bus gain" text="0" from={0} to={80} color="#1c7fc4" shape={bars} /></div>
                            <div className="flex w-16"><Slider label="Bus send pan" text="0% C" from={47} to={53} color="#e04040" shape={send} /></div>
                            <Drop label="Bus out" value="Master" mark="out" />
                            <Mini t="io" />
                          </div>
                          <div className="ml-[3px] h-20 min-w-0 flex-1 border border-[#c3d43c] bg-[#676d7b]">
                            <div className="relative h-full">
                              <svg viewBox="0 0 64 78" width="100%" height="100%" className="absolute inset-0">
                                <circle cx="29" cy="40" r="30" fill="#6b6600" />
                                <path d="M14.500 14v64" stroke="#4a4e38" />
                                <path d="M0 13.500h64" stroke="#f0f2e8" strokeDasharray="3 2" />
                                <path d="M25 12h3v3h-3zM51 12h3v3h-3z" fill="#e8dc50" />
                                <path d="M31 38v14l3.500-3 3 6.500 2.500-1-3-6.500h5z" fill="#fff" stroke="#22242a" strokeWidth=".7" />
                              </svg>
                              <label className="relative flex items-center gap-[5px] whitespace-nowrap pl-[3px] pt-px text-[8px] leading-[10px] text-[#e6e6a0]">
                                <input type="checkbox" className="size-[8px] shrink-0 appearance-none border border-[#2c4a30] bg-[#7df07a]" />PerfectSpace
                              </label>
                            </div>
                          </div>
                        </div>
                      </div>
                      <Meter h={101} first={13} step={9.500} lit={18} labels={trackDb} />
                    </div>
                    <Scale marks={busScale} h={102} size={7} />
                    <div className="relative min-w-0 flex-1 bg-[#a5b0bc]">
                      <div className="h-[30px] border-b border-[#2fb4cc]" />
                      <div className="absolute inset-y-0 left-[186px] w-px bg-[#858d9a]" />
                    </div>
                  </section>
                  <section className="flex min-h-0 flex-1 overflow-hidden">
                    <div className="flex w-[243px] shrink-0 gap-0.5 bg-[#757b8a]">
                      <div className="flex w-[228px] flex-col gap-[3px] pt-px">
                        <BusTop name="bv" solo={false} />
                        <div className="flex">
                          <BusArrows second={false} />
                          <div className="ml-[3px] flex w-[99px] shrink-0 gap-1"><Mini t="RD" /><Mini t="W" /><Slider label="Bv volume" text="-3.2" from={0} to={67} color="#17c3d4" shape={ramp} /></div>
                          <div className="ml-[35px] h-[30px] min-w-0 flex-1 border border-[#454a58] bg-[#676d7b]">
                            <label className="flex items-center gap-[5px] whitespace-nowrap pl-[3px] text-[8px] leading-[10px] text-[#dfe2e8]">
                              <input type="checkbox" className="size-[8px] shrink-0 appearance-none border border-[#2c4a30] bg-[#7df07a]" />UAD Fairchild
                            </label>
                          </div>
                        </div>
                      </div>
                      <Meter h={30} first={12} step={9.500} lit={30} labels={["-6", "-12"]} />
                    </div>
                    <Scale marks={busScale.slice(0, 3)} h={30} size={7} />
                    <div className="relative min-w-0 flex-1 bg-[#8a8f9b]">
                      <div className="absolute inset-y-0 left-[186px] w-px bg-[#747a88]" />
                    </div>
                  </section>
                </div>
                <VScroll above="flex-[42]" below="flex-[18]" />
              </div>
              <div className="flex h-[16px] shrink-0">
                <div className="flex w-[243px] shrink-0 items-center border-t border-[#2c303a] text-[9px] text-[#15181f]">
                  <button className="flex h-full w-7 items-center justify-center bg-white font-bold text-black [clip-path:polygon(18%_0,82%_0,100%_100%,0_100%)]">All</button>
                  {([["Custom", "w-[43px]"], ["Mix", "w-[26px]"], ["FX", "w-[22px]"], ["I/O", "w-[26px]"]] as const).map(([t, w]) => (
                    <button key={t} className={"flex h-full items-center justify-between pl-1 " + w}>
                      {t}
                      <svg width="5" height="13" viewBox="0 0 5 13"><path d={t === "I/O" ? "M4.500 0L.5 13" : "M.5 0l4 13"} stroke="#20242d" /></svg>
                    </button>
                  ))}
                  <span className="flex-1" />
                  <button aria-label="Show panel" className="mr-[3px] flex size-[9px] items-center justify-center border border-[#15181f]"><svg width="5" height="3" viewBox="0 0 5 3"><path d="M0 0h5L2.500 3z" fill="#15181f" /></svg></button>
                </div>
                <div className="w-[17px] shrink-0" />
                <div className="flex min-w-0 flex-1 items-center">
                  <div className="flex h-[14px] min-w-0 flex-1 bg-[#fbfaf4]">
                    <Chevron dir="left" />
                    <div className="flex-[441]" />
                    <div className="h-[13px] w-3 rounded-[2px] border border-[#aec0f0] bg-[#c5d2f8]" />
                    <div className="flex-[248]" />
                    <Chevron dir="right" />
                  </div>
                  <div className="flex w-[45px] shrink-0 items-center gap-[3px] pl-0.5">
                    <ZoomMark />
                    <div className="flex h-3 w-[5px] flex-col justify-end border border-[#c9ccd4] bg-[#8a8f9b]"><div className="h-1 bg-[#6e1018]" /></div>
                    <ZoomMark plus />
                  </div>
                </div>
              </div>
            </div>
          </div>
        </div>

        <footer className="flex h-4 shrink-0 items-center border-t border-[#f8f6ee] bg-[#ebe7d6] pr-0.5 text-[9px] text-[#1c1c16]">
          <span className="flex-1 pl-px">For Help, press F1</span>
          <span className="w-[115px]">79:01:655</span>
          <span className="w-[67px] text-[#1f7a2a]">Engine On</span>
          <div className="flex w-[45px] gap-[3px] text-center font-bold leading-3">
            <span className="w-3 bg-[#fff02a]">M</span><span className="w-3 bg-[#2fd03c]">S</span>
          </div>
          <span className="w-[67px]">44.1kHz, 24-bit</span>
          <span className="w-[124px]">Disk space [D]: 28.4GB (9%)</span>
          <div className="flex gap-0.5 leading-3">
            <span className="w-[61px] border-r-[6px] border-[#8c1a14] bg-linear-to-r from-[#4cc45c] from-42% to-[#7a7a74] to-42% pl-0.5">CPU: 41%</span>
            <span className="w-[61px] border-r-[6px] border-[#8c1a14] bg-linear-to-r from-[#4cc45c] from-30% to-[#7a7a74] to-30% pl-0.5">Disk: 29%</span>
          </div>
        </footer>
      </main>
    </div>
  );
}
